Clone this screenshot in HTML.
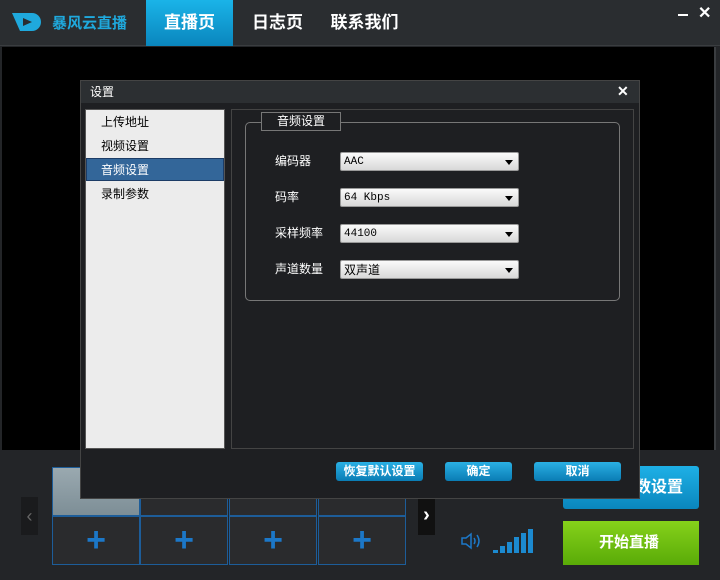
<!DOCTYPE html>
<html><head><meta charset="utf-8"><style>
*{margin:0;padding:0;box-sizing:border-box}
body{width:720px;height:580px;background:#232528;position:relative;overflow:hidden;font-family:"Liberation Sans","Noto Sans CJK SC",sans-serif;color:#fff}
.a{position:absolute}
.top{left:0;top:0;width:720px;height:46px;background:#2a2d30;border-bottom:1px solid #3a3d40}
.tab{top:0;height:46px;font-size:17px;font-weight:bold;line-height:46px;text-align:center}
.main{left:2px;top:47px;width:714px;height:403px;background:#000;border-right:2px solid #3a3d40}
.dlg{left:80px;top:80px;width:560px;height:419px;background:#1e1f22;border:1px solid #444}
.sel{width:179px;height:19px;left:340px;background:linear-gradient(#fafafa,#d8d8d8);border:1px solid #999;border-radius:2px;color:#000;font-size:11px;padding-left:3px;font-family:"Liberation Mono","Noto Sans CJK SC",monospace;display:flex;align-items:center}
.sel:after{content:"";position:absolute;right:5px;top:7px;border:4px solid transparent;border-top:5px solid #000;border-bottom:0}
.lbl{left:275px;font-size:12px;color:#fff}
.btn{top:462px;height:19px;background:linear-gradient(#2ab0e4,#0a7cb4);border-radius:3px;font-size:12px;font-weight:bold;text-align:center;line-height:19px}
.cell{width:88px;height:49px;border:1px solid #1d5d99;background:#2a2b2d;color:#1c78c8;font-size:34px;text-align:center;line-height:46px;font-weight:bold}
.li{left:101px;font-size:12px;color:#000}
</style></head><body>
<div class="a top"></div>
<svg class="a" style="left:12px;top:12px" width="34" height="20" viewBox="0 0 34 20"><path d="M0 1h20a9 9 0 0 1 0 18h-12z" fill="#1fa9dd"/><path d="M11 6l9 4-9 4z" fill="#2a2d30"/></svg>
<div class="a" style="left:52px;top:12px;font-size:15px;font-weight:bold;color:#1fa9dd">暴风云直播</div>
<div class="a tab" style="left:146px;width:87px;background:linear-gradient(#1ab4e8,#0a86bd)">直播页</div>
<div class="a tab" style="left:240px;width:75px">日志页</div>
<div class="a tab" style="left:322px;width:85px">联系我们</div>
<div class="a" style="left:678px;top:14px;width:10px;height:2px;background:#fff"></div>
<div class="a" style="left:698px;top:3px;font-size:16px;font-weight:bold">✕</div>
<div class="a main"></div>
<!-- bottom -->
<div class="a" style="left:21px;top:497px;width:17px;height:38px;background:#1a1b1d;color:#666;font-size:18px;text-align:center;line-height:38px">‹</div>
<div class="a" style="left:418px;top:497px;width:17px;height:38px;background:#111;color:#fff;font-size:20px;text-align:center;line-height:36px;font-weight:bold">›</div>
<div class="a cell" style="left:52px;top:467px;background:linear-gradient(#9aa9b0,#7d8e96)"></div>
<div class="a cell" style="left:140px;top:467px"></div>
<div class="a cell" style="left:229px;top:467px"></div>
<div class="a cell" style="left:318px;top:467px"></div>
<div class="a cell" style="left:52px;top:516px">+</div>
<div class="a cell" style="left:140px;top:516px">+</div>
<div class="a cell" style="left:229px;top:516px">+</div>
<div class="a cell" style="left:318px;top:516px">+</div>
<svg class="a" style="left:460px;top:531px" width="22" height="20" viewBox="0 0 22 20" fill="none" stroke="#1c78c8" stroke-width="1.5"><path d="M2 7h4l5-4v14l-5-4H2z"/><path d="M14 7q2 3 0 6M17 4q4 6 0 12"/></svg>
<svg class="a" style="left:493px;top:529px" width="46" height="24"><g fill="#1c8ad0"><rect x="0" y="21" width="5" height="3"/><rect x="7" y="17" width="5" height="7"/><rect x="14" y="13" width="5" height="11"/><rect x="21" y="8" width="5" height="16"/><rect x="28" y="4" width="5" height="20"/><rect x="35" y="0" width="5" height="24"/></g></svg>
<div class="a" style="left:563px;top:466px;width:136px;height:43px;border-radius:3px;background:linear-gradient(#1eb0e6,#0a86bd);font-size:16px;font-weight:bold;line-height:43px;text-align:right;padding-right:16px">参数设置</div>
<div class="a" style="left:563px;top:521px;width:136px;height:44px;background:linear-gradient(#86d11a,#5aab08);font-size:15px;font-weight:bold;line-height:44px;padding-left:36px">开始直播</div>
<!-- dialog -->
<div class="a dlg"></div>
<div class="a" style="left:81px;top:81px;width:558px;height:22px;background:#2c2f32"></div>
<div class="a" style="left:90px;top:83px;font-size:12px">设置</div>
<div class="a" style="left:617px;top:83px;font-size:14px;font-weight:bold">✕</div>
<div class="a" style="left:85px;top:109px;width:140px;height:340px;background:#ececec;border:1px solid #555"></div>
<div class="a" style="left:86px;top:158px;width:138px;height:23px;background:#336699;border:1px solid #1c3c66"></div>
<div class="a li" style="top:113px">上传地址</div>
<div class="a li" style="top:137px">视频设置</div>
<div class="a li" style="top:161px;color:#fff">音频设置</div>
<div class="a li" style="top:185px">录制参数</div>
<div class="a" style="left:231px;top:109px;width:403px;height:340px;border:1px solid #444"></div>
<div class="a" style="left:245px;top:122px;width:375px;height:179px;border:1px solid #777;border-radius:5px"></div>
<div class="a" style="left:261px;top:112px;width:80px;height:19px;border:1px solid #777;background:#1e1f22;font-size:12px;text-align:center;line-height:17px">音频设置</div>
<div class="a lbl" style="top:152px">编码器</div>
<div class="a lbl" style="top:188px">码率</div>
<div class="a lbl" style="top:224px">采样频率</div>
<div class="a lbl" style="top:260px">声道数量</div>
<div class="a sel" style="top:152px">AAC</div>
<div class="a sel" style="top:188px">64 Kbps</div>
<div class="a sel" style="top:224px">44100</div>
<div class="a sel" style="top:260px;font-size:12px">双声道</div>
<div class="a btn" style="left:336px;width:87px">恢复默认设置</div>
<div class="a btn" style="left:445px;width:67px">确定</div>
<div class="a btn" style="left:534px;width:87px">取消</div>
</body></html>
